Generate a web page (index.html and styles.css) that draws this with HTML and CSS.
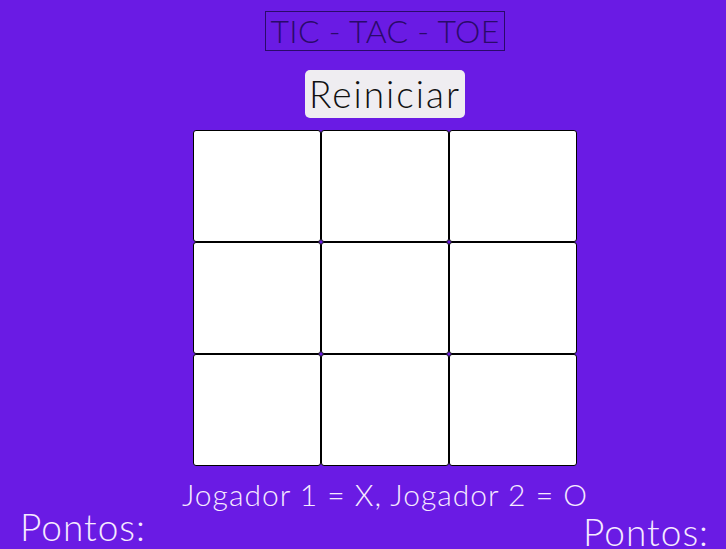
FILE: index.html
```html
<!DOCTYPE html>
<html lang="pt">
<head>
<meta charset="utf-8">
<title>Tic Tac Toe</title>
<link rel="stylesheet" href="styles.css">
</head>
<body>
<main class="game">
  <h1 class="title">TIC - TAC - TOE</h1>
  <button class="reset">Reiniciar</button>
  <div class="board">
    <div class="cell"></div><div class="cell"></div><div class="cell"></div>
    <div class="cell"></div><div class="cell"></div><div class="cell"></div>
    <div class="cell"></div><div class="cell"></div><div class="cell"></div>
  </div>
  <p class="legend">Jogador 1 = X, Jogador 2 = O</p>
</main>
<footer class="scores">
  <span class="score score-left">Pontos:</span>
  <span class="score score-right">Pontos:</span>
</footer>
</body>
</html>
```
FILE: styles.css
```css
* { box-sizing: border-box; }
html, body { margin: 0; padding: 0; }
body {
  background: #6a1be4;
  font-family: "Lato", "Open Sans", sans-serif;
  font-weight: 300;
  height: 549px;
  overflow: hidden;
}
.game {
  display: flex;
  flex-direction: column;
  align-items: center;
  padding-left: 44px;
  padding-top: 11px;
}
.title {
  margin: 0;
  font-size: 32px;
  font-weight: 300;
  letter-spacing: 0.3px;
  line-height: 38px;
  color: #2a0a6a;
  border: 1px solid #2a0a6a;
  padding: 0;
  width: 240px;
  text-align: center;
  white-space: nowrap;
}
.reset {
  margin-top: 19px;
  font-family: inherit;
  font-weight: 300;
  font-size: 37px;
  letter-spacing: 2px;
  line-height: 48px;
  height: 48px;
  width: 160px;
  padding: 0;
  border: none;
  border-radius: 5px;
  background: #efedf1;
  color: #111;
  white-space: nowrap;
}
.board {
  margin-top: 12px;
  display: grid;
  grid-template-columns: repeat(3, 128px);
  grid-template-rows: repeat(3, 112px);
}
.cell {
  background: #fff;
  border: 1px solid #000;
  border-radius: 3px;
}
.legend {
  margin: 10px 0 0;
  font-size: 30px;
  letter-spacing: 1px;
  line-height: 36px;
  color: #f6eaff;
  white-space: nowrap;
}
.scores {
  position: relative;
}
.score {
  position: absolute;
  font-size: 37px;
  letter-spacing: 1px;
  color: #f6eaff;
  line-height: 40px;
}
.score-left { left: 20px; top: -5px; }
.score-right { right: 17px; top: 0; }
```
